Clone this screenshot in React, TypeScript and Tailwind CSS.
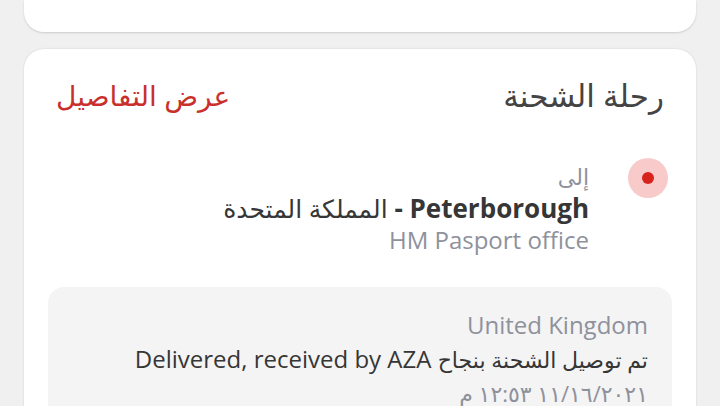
import React from 'react'

const FONT = { fontFamily: '"Open Sans", "DejaVu Sans", sans-serif' }

export default function App() {
  return (
    <div dir="rtl" className="min-h-screen bg-[#f0f0f0] px-6 overflow-hidden" style={FONT}>
      {/* bottom of the previous card */}
      <div className="h-[32px] rounded-b-[20px] bg-white shadow-[0_1px_2px_rgba(0,0,0,0.15)]" />

      <div className="mt-[17px] rounded-t-[20px] bg-white shadow-[0_0_2px_rgba(0,0,0,0.15)] pt-7 pb-8">
        <div className="flex items-center justify-between px-8 h-9">
          <h2 className="text-[31px] leading-9 text-[#444]">رحلة الشحنة</h2>
          <a className="text-[28px] leading-9 text-[#c9302c]">عرض التفاصيل</a>
        </div>

        <div className="mt-[45px] flex items-start gap-[39px] pr-7 pl-8">
          <div className="w-10 h-10 rounded-full bg-[#f8caca] flex items-center justify-center shrink-0">
            <div className="w-3 h-3 rounded-full bg-[#d8231d]" />
          </div>
          <div className="pt-[2px] flex flex-col text-right">
            <span className="text-[22px] leading-8 text-[#8e919c]">إلى</span>
            <span className="text-[26px] leading-8 text-[#363636]">
              <b className="font-bold">Peterborough -</b>{' '}
              <span className="text-[25px]">المملكة المتحدة</span>
            </span>
            <span className="text-[24px] leading-8 text-[#8e919c]">HM Pasport office</span>
          </div>
        </div>

        <div className="mt-[31px] mx-6 rounded-2xl bg-[#f4f4f4] px-6 pt-[22px] pb-4 flex flex-col text-right">
          <span className="text-[24px] leading-8 text-[#8e919c]">United Kingdom</span>
          <span className="text-[24px] leading-9 text-[#363636]">
            <span className="text-[22px]">تم توصيل الشحنة بنجاح</span> Delivered, received by AZA
          </span>
          <span className="text-[22px] leading-8 text-[#8e919c]">١١/١٦/٢٠٢١ ١٢:٥٣ م</span>
        </div>
      </div>
    </div>
  )
}
